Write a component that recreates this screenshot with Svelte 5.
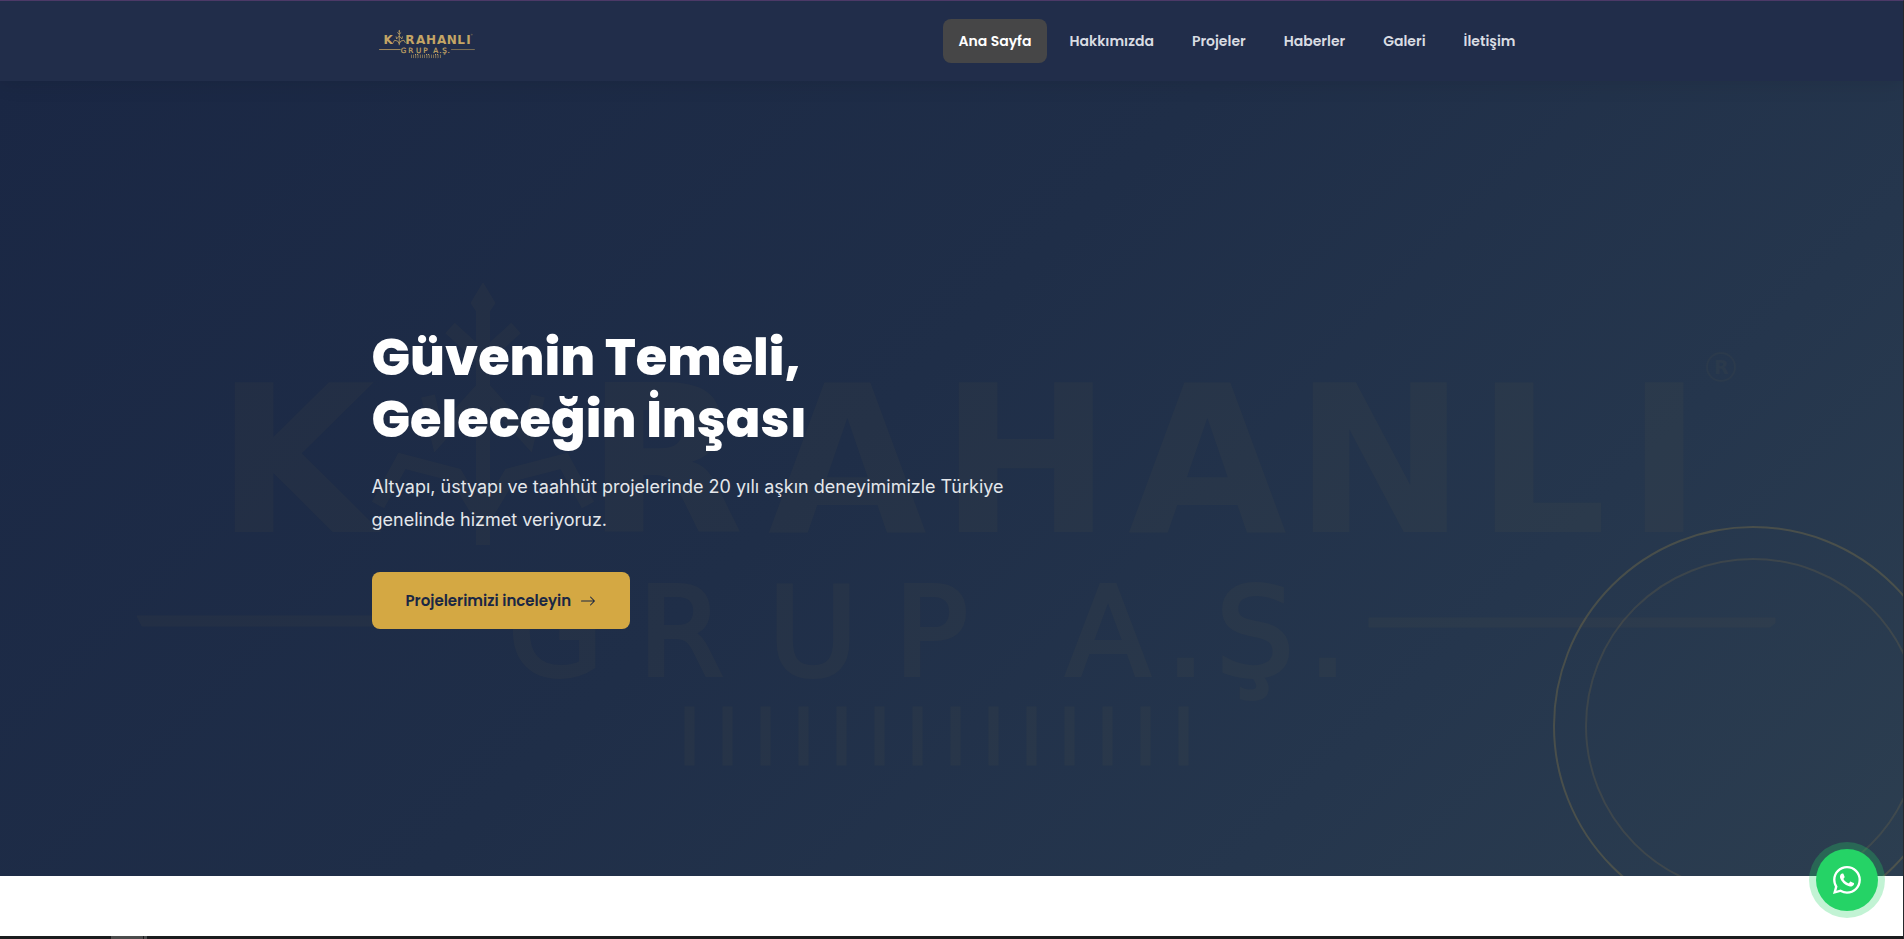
<script>
    // --- DATA ---
    const navItems = [
        { label: 'Ana Sayfa', href: '#ana-sayfa' },
        { label: 'Hakkımızda', href: '#hakkimizda' },
        { label: 'Projeler', href: '#projeler' },
        { label: 'Haberler', href: '#haberler' },
        { label: 'Galeri', href: '#galeri' },
        { label: 'İletişim', href: '#iletisim' }
    ];

    // the tree stands in for the first A
    const nameLetters = [
        { char: 'K', x: 216 },
        { char: 'R', x: 586 },
        { char: 'A', x: 768 },
        { char: 'H', x: 940 },
        { char: 'A', x: 1128 },
        { char: 'N', x: 1294 },
        { char: 'L', x: 1476 },
        { char: 'I', x: 1626 }
    ];

    const subLetters = [
        { char: 'G', x: 508 },
        { char: 'R', x: 638 },
        { char: 'U', x: 768 },
        { char: 'P', x: 894 },
        { char: 'A', x: 1066 },
        { char: '.', x: 1166 },
        { char: 'Ş', x: 1216 },
        { char: '.', x: 1308 }
    ];

    const bars = Array.from({ length: 14 }, (_, i) => 685 + i * 38);

    // --- STATE ---
    let active = $state('Ana Sayfa');
</script>

{#snippet logo()}
    {#each nameLetters as letter}
        <text class="logo-name" x={letter.x} y="532">{letter.char}</text>
    {/each}

    <g class="tree">
        <path d="M483 300V545" />
        <path d="M450 328l33 30 33-30" />
        <path d="M428 396l10 42 45-50 45 50 10-42" />
        <path d="M378 505l24-44 54 14 27 45 27-45 54-14 24 44" />
    </g>
    <path d="M483 283l12 20-12 18-12-18z" />

    <circle class="reg" cx="1721" cy="367" r="14" />
    <text class="logo-reg" x="1714" y="374">R</text>

    {#each subLetters as letter}
        <text class="logo-sub" x={letter.x} y="675">{letter.char}</text>
    {/each}

    <path d="M137 616H506V626H142z" />
    <path d="M1369 618H1775V623L1770 627H1369z" />

    {#each bars as x}
        <rect {x} y="707" width="9" height="58" />
    {/each}
{/snippet}

<div class="page">
    <header>
        <div class="container header-row">
            <a class="brand" href="#ana-sayfa" aria-label="Karahanlı Grup A.Ş.">
                <svg class="brand-logo" viewBox="137 275 1640 500" aria-hidden="true">
                    {@render logo()}
                </svg>
            </a>
            <nav>
                {#each navItems as item}
                    <a
                        class="nav-link {active === item.label ? 'active' : ''}"
                        href={item.href}
                        onclick={() => (active = item.label)}>{item.label}</a>
                {/each}
            </nav>
        </div>
    </header>

    <section class="hero" id="ana-sayfa">
        <svg class="watermark" viewBox="0 81 1903 795" aria-hidden="true">
            {@render logo()}
        </svg>
        <div class="ring"></div>

        <div class="container">
            <div class="hero-text">
                <h1>Güvenin Temeli,<br />Geleceğin İnşası</h1>
                <p>Altyapı, üstyapı ve taahhüt projelerinde 20 yılı aşkın deneyimimizle Türkiye genelinde hizmet veriyoruz.</p>
                <a class="btn" href="#projeler">
                    Projelerimizi inceleyin
                    <svg width="16" height="16" viewBox="0 0 16 16" fill="currentColor" aria-hidden="true">
                        <path fill-rule="evenodd" d="M1 8a.5.5 0 0 1 .5-.5h11.793l-3.147-3.146a.5.5 0 0 1 .708-.708l4 4a.5.5 0 0 1 0 .708l-4 4a.5.5 0 0 1-.708-.708L13.293 8.5H1.5A.5.5 0 0 1 1 8" />
                    </svg>
                </a>
            </div>
        </div>
    </section>

    <section class="next"></section>

    <div class="edge">
        <span class="edge-mark"></span>
        <span class="edge-mark small"></span>
    </div>
</div>

<a class="whatsapp" href="#iletisim" aria-label="WhatsApp">
    <svg width="28" height="28" viewBox="0 0 16 16" fill="currentColor" aria-hidden="true">
        <path d="M13.601 2.326A7.85 7.85 0 0 0 7.994 0C3.627 0 .068 3.558.064 7.926c0 1.399.366 2.76 1.057 3.965L0 16l4.204-1.102a7.9 7.9 0 0 0 3.79.965h.004c4.368 0 7.926-3.558 7.93-7.93A7.9 7.9 0 0 0 13.6 2.326zM7.994 14.521a6.6 6.6 0 0 1-3.356-.92l-.24-.144-2.494.654.666-2.433-.156-.251a6.56 6.56 0 0 1-1.007-3.505c0-3.626 2.957-6.584 6.591-6.584a6.56 6.56 0 0 1 4.66 1.931 6.56 6.56 0 0 1 1.928 4.66c-.004 3.639-2.961 6.592-6.592 6.592m3.615-4.934c-.197-.099-1.17-.578-1.353-.646-.182-.065-.315-.099-.445.099-.133.197-.513.646-.627.775-.114.133-.232.148-.43.05-.197-.1-.836-.308-1.592-.985-.59-.525-.985-1.175-1.103-1.372-.114-.198-.011-.304.088-.403.087-.088.197-.232.296-.346.1-.114.133-.198.198-.33.065-.134.034-.248-.015-.347-.05-.099-.445-1.076-.612-1.47-.16-.389-.323-.335-.445-.34-.114-.007-.247-.007-.38-.007a.73.73 0 0 0-.529.247c-.182.198-.691.677-.691 1.654s.71 1.916.81 2.049c.098.133 1.394 2.132 3.383 2.992.47.205.84.326 1.129.418.475.152.904.129 1.246.08.38-.058 1.171-.48 1.338-.943.164-.464.164-.86.114-.943-.049-.084-.182-.133-.38-.232" />
    </svg>
</a>

<style>
    :global(body) {
        margin: 0;
        background: #fff;
        font-family: Inter, 'Liberation Sans', sans-serif;
    }

    .page {
        box-sizing: border-box;
        min-height: 100vh;
        display: flex;
        flex-direction: column;
        border-top: 1px solid #503c6c;
        border-right: 1px solid #26282c;
    }

    .container {
        box-sizing: border-box;
        width: 100%;
        max-width: 1200px;
        margin: 0 auto;
        padding: 0 20px;
    }

    /* header */
    header {
        position: relative;
        z-index: 2;
        background: #212d4a;
        box-shadow: 0 2px 20px rgba(0, 0, 0, 0.1);
    }

    .header-row {
        height: 80px;
        display: flex;
        align-items: center;
        justify-content: space-between;
    }

    .brand { display: flex; padding: 6px 7px 0; }
    .brand-logo { width: 96px; height: 30px; fill: #c4a565; stroke: #c4a565; }

    .logo-name { font: bold 205px 'DejaVu Sans', sans-serif; stroke: none; }
    .logo-sub { font: 123px 'DejaVu Sans', sans-serif; stroke-width: 4; }
    .logo-reg { font: bold 19px 'DejaVu Sans', sans-serif; stroke: none; }
    .tree { fill: none; stroke-width: 14; }
    .reg { fill: none; stroke-width: 2; }

    nav { display: flex; gap: 6px; }

    .nav-link {
        padding: 10px 16px;
        border-radius: 8px;
        color: #d9dce2;
        font-family: Poppins, Inter, sans-serif;
        font-size: 14px;
        font-weight: 600;
        line-height: 24px;
        text-decoration: none;
    }

    .nav-link:hover { color: #fff; }
    .nav-link.active { background: #464647; color: #fff; }

    /* hero */
    .hero {
        position: relative;
        flex: 1;
        display: flex;
        align-items: center;
        padding-bottom: 2px;
        overflow: hidden;
        background: linear-gradient(135deg, #1a2744 0%, #1f2e48 45%, #25364d 75%, #2c3e50 100%);
    }

    .watermark {
        position: absolute;
        inset: 0;
        width: 100%;
        height: 100%;
        fill: #d4a843;
        stroke: #d4a843;
        opacity: 0.03;
    }

    .ring {
        position: absolute;
        right: -50px;
        bottom: -50px;
        box-sizing: border-box;
        width: 400px;
        height: 400px;
        border: 2px solid rgba(212, 168, 67, 0.2);
        border-radius: 50%;
    }

    .ring::after {
        content: '';
        position: absolute;
        inset: 30px;
        border: 2px solid rgba(212, 168, 67, 0.12);
        border-radius: 50%;
    }

    .hero-text { position: relative; max-width: 700px; }

    h1 {
        margin: 0 0 20px;
        color: #fff;
        font-family: Poppins, Inter, sans-serif;
        font-size: 51px;
        font-weight: 800;
        line-height: 62px;
    }

    p {
        margin: 0 0 36px;
        color: #e4e7eb;
        font-size: 18px;
        line-height: 33px;
    }

    .btn {
        display: inline-flex;
        align-items: center;
        gap: 9px;
        padding: 16px 34px;
        border-radius: 8px;
        background: #d4a843;
        color: #1a2744;
        font-family: Poppins, Inter, sans-serif;
        font-size: 15px;
        font-weight: 600;
        line-height: 25px;
        text-decoration: none;
    }

    .btn:hover { background: #c09637; }

    .next { height: 60px; background: #fff; }

    .edge {
        display: flex;
        gap: 1px;
        height: 3px;
        padding-left: 111px;
        background: #1b1c1e;
    }

    .edge-mark { width: 32px; background: #4b4c4c; }
    .edge-mark.small { width: 3px; }

    /* floating button */
    .whatsapp {
        position: fixed;
        right: 26px;
        bottom: 28px;
        z-index: 3;
        display: flex;
        align-items: center;
        justify-content: center;
        width: 62px;
        height: 62px;
        border-radius: 50%;
        background: #25d366;
        box-shadow: 0 0 0 7px rgba(37, 211, 102, 0.28);
        color: #fff;
    }
</style>
